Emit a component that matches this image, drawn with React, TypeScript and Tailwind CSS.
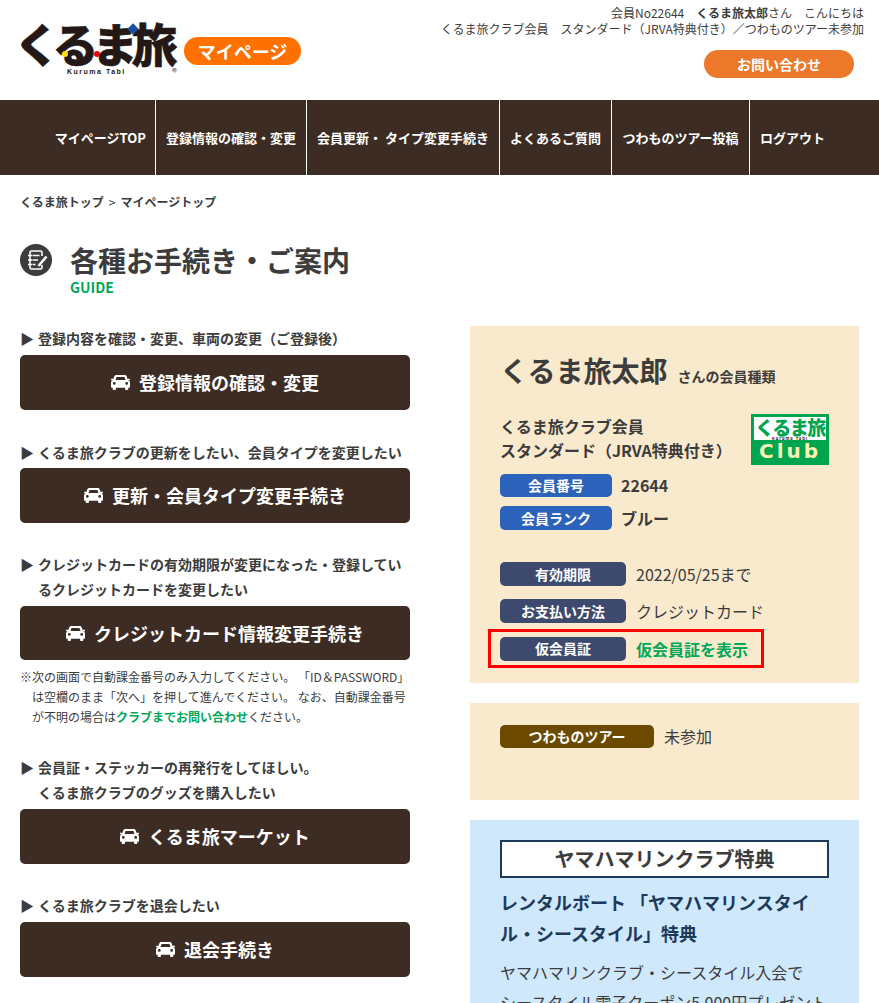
function Car({ className = "" }: { className?: string }) {
  return (
    <svg viewBox="0 0 19 15" className={className} fill="currentColor">
      <path fillRule="evenodd" d="M5.300 0h8.400c1 0 1.800.6 2.100 1.500L17 5c1.200.5 2 1.500 2 2.800V12c0 .4-.3.700-.7.700h-1V14c0 .6-.4 1-1 1h-1.200c-.6 0-1-.4-1-1v-1.300H4.900V14c0 .6-.4 1-1 1H2.700c-.6 0-1-.4-1-1v-1.300h-1C.300 12.700 0 12.400 0 12V7.800C0 6.500.800 5.500 2 5l1.200-3.500C3.500.6 4.300 0 5.300 0zM5.600 2 4.500 5h10L13.400 2zM3.300 7a1.400 1.400 0 1 0 0 2.800 1.400 1.400 0 0 0 0-2.800zm12.400 0a1.400 1.400 0 1 0 0 2.800 1.400 1.400 0 0 0 0-2.800z" />
      <rect x="0" y="3.800" width="2.500" height="1.400" rx=".5" />
      <rect x="16.500" y="3.800" width="2.500" height="1.400" rx=".5" />
    </svg>
  );
}

function ActionButton({ label, className = "mt-[4px] h-[55px]" }: { label: string; className?: string }) {
  return (
    <div className={`flex items-center justify-center gap-[9px] rounded-[5px] bg-[#3c2c23] text-[18px] font-bold text-white ${className}`}>
      <Car className="h-[15px] w-[19px]" />
      <span>{label}</span>
    </div>
  );
}

function Lead({ children, className = "" }: { children: React.ReactNode; className?: string }) {
  return (
    <div className={`flex text-[14px] leading-[24.5px] font-bold text-[#3c3c3c] ${className}`}>
      <span className="mr-[3px] w-[15px] shrink-0">▶</span>
      <span>{children}</span>
    </div>
  );
}

function Tag({ label, w, bg, h = "h-[24px]" }: { label: string; w: string; bg: string; h?: string }) {
  return (
    <span className={`flex shrink-0 items-center justify-center rounded-[5px] text-[14px] font-bold text-white ${h} ${w} ${bg}`}>
      {label}
    </span>
  );
}

export default function App() {
  const nav = [
    ["マイページTOP", "w-[156px] justify-end pr-[9px]"],
    ["登録情報の確認・変更", "w-[151px] justify-center"],
    ["会員更新・ タイプ変更手続き", "w-[193px] justify-center"],
    ["よくあるご質問", "w-[112px] justify-center"],
    ["つわものツアー投稿", "w-[138px] justify-center"],
    ["ログアウト", "w-[129px] justify-start pl-[10px]"],
  ];
  return (
    <div className="h-[1003px] w-[879px] overflow-hidden bg-white text-[#3c3c3c] [text-spacing-trim:space-all]" style={{ fontFamily: '"Noto Sans CJK JP", "Noto Sans", sans-serif' }}>
      <header className="flex h-[100px] justify-between">
        <div className="flex items-start pl-[20px] pt-[19px]">
          <div className="relative h-[60px] w-[164px]">
            <div className="-ml-[6px] text-[46px] leading-[46px] font-black tracking-[-6.500px] text-[#231815] [-webkit-text-stroke:0.5px_#231815]">くるま旅</div>
            <span className="absolute left-[109px] top-[6px] h-[8px] w-[8px] rotate-45 bg-[#1d50a2]" />
            <span className="absolute left-[42px] top-[32px] h-[6px] w-[6px] rounded-full bg-[#ffe100]" />
            <span className="absolute left-[74px] top-[32px] h-[6px] w-[6px] rounded-full bg-[#e60012]" />
            <span className="absolute left-[47px] top-[48px] text-[7px] leading-[10px] font-bold tracking-[1.500px] text-[#231815]" style={{ fontFamily: '"Liberation Sans", sans-serif' }}>Kuruma Tabi</span>
            <span className="absolute left-[152px] top-[47px] text-[10px] leading-[12px]">®</span>
          </div>
          <div className="mt-[18px] flex h-[28px] w-[117px] items-center justify-center rounded-full bg-[#fe7000] text-[18px] font-bold text-white">マイページ</div>
        </div>
        <div className="flex flex-col items-end pr-[15px] pt-[5px] text-[12px] leading-[16px]">
          <div>会員No22644　<b>くるま旅太郎</b>さん　こんにちは</div>
          <div>くるま旅クラブ会員　スタンダード（JRVA特典付き）／つわものツアー未参加</div>
          <div className="mr-[10px] mt-[13px] flex h-[28px] w-[150px] items-center justify-center rounded-full bg-[#ec782a] text-[14px] font-bold text-white">お問い合わせ</div>
        </div>
      </header>

      <nav className="flex h-[75px] bg-[#3c2c23] text-[13px] font-bold text-white">
        {nav.map(([label, cls], i) => (
          <div key={label} className={`flex items-center ${cls} ${i < 5 ? "border-r border-white" : ""}`}>{label}</div>
        ))}
      </nav>

      <div className="px-[20px] pt-[18px] text-[12px] leading-[18px] font-bold">くるま旅トップ<span className="mx-[5px] font-normal">&gt;</span>マイページトップ</div>

      <div className="mt-[31px] flex pl-[20px]">
        <div className="mt-[2px] h-[32px] w-[32px] rounded-full bg-[#3c3c3c]">
          <svg viewBox="0 0 32 32" className="h-[32px] w-[32px]" fill="none" stroke="#fff" strokeWidth="1.600">
            <path d="M22 12V8.500c0-.8-.6-1.500-1.500-1.500h-9c-.8 0-1.500.7-1.500 1.500v15c0 .8.7 1.500 1.500 1.500h9c.9 0 1.500-.7 1.500-1.500V21" />
            <path d="M8 11.500h4.500M8 16h4.500M8 20.500h4.500M13 11.500h6.500M13 16h5M13 20.500h2.500" />
            <path d="m18.500 22 8-9.500" strokeWidth="2.600" />
          </svg>
        </div>
        <div className="ml-[18px]">
          <h1 className="text-[28px] leading-[36px] font-bold">各種お手続き・ご案内</h1>
          <div className="text-[14px] leading-[18px] font-bold text-[#00a85a]">GUIDE</div>
        </div>
      </div>

      <div className="mt-[30px] flex items-start gap-[60px] pl-[20px]">
        <div className="w-[390px] shrink-0">
          <Lead>登録内容を確認・変更、車両の変更（ご登録後）</Lead>
          <ActionButton label="登録情報の確認・変更" />
          <Lead className="mt-[30px]">くるま旅クラブの更新をしたい、会員タイプを変更したい</Lead>
          <ActionButton label="更新・会員タイプ変更手続き" />
          <Lead className="mt-[29px]">クレジットカードの有効期限が変更になった・登録しているクレジットカードを変更したい</Lead>
          <ActionButton label="クレジットカード情報変更手続き" className="mt-[5px] h-[54px]" />
          <p className="mt-[7px] pl-[12px] -indent-[12px] text-[12px] leading-[20px]">※次の画面で自動課金番号のみ入力してください。 「ID＆PASSWORD」は空欄のまま「次へ」を押して進んでください。 なお、自動課金番号が不明の場合は<b className="text-[#00a85a]">クラブまでお問い合わせ</b>ください。</p>
          <Lead className="mt-[28px]">会員証・ステッカーの再発行をしてほしい。<br />くるま旅クラブのグッズを購入したい</Lead>
          <ActionButton label="くるま旅マーケット" className="mt-[5px] h-[55px]" />
          <Lead className="mt-[29px]">くるま旅クラブを退会したい</Lead>
          <ActionButton label="退会手続き" />
        </div>

        <div className="w-[389px] shrink-0">
          <section className="h-[357px] bg-[#faeacd] px-[30px] pt-[24px]">
            <div className="flex items-baseline">
              <span className="text-[28px] leading-[40px] font-bold">くるま旅太郎</span>
              <span className="ml-[10px] text-[14px] font-bold">さんの会員種類</span>
            </div>
            <div className="mt-[24px] flex justify-between">
              <div className="text-[16px] leading-[24px] font-bold">くるま旅クラブ会員<br />スタンダード（JRVA特典付き）</div>
              <div className="flex h-[51px] w-[78px] flex-col items-center bg-[#00a54f] p-[3px]">
                <div className="flex h-[24px] w-full flex-col items-center bg-white">
                  <span className="text-[19px] leading-[19px] font-black tracking-[-1.500px] text-[#00a54f]">くるま旅</span>
                  <span className="text-[4px] leading-[4px] font-bold tracking-[1px] text-[#231815]">Kuruma Tabi</span>
                </div>
                <div className="text-[20px] leading-[22px] font-bold tracking-[3px] text-[#fdf3b4]" style={{ fontFamily: '"DejaVu Sans", sans-serif' }}>Club</div>
              </div>
            </div>
            <div className="mt-[9px] flex items-center gap-[9px]">
              <Tag label="会員番号" w="w-[112px]" h="h-[23px]" bg="bg-[#2d62bb]" />
              <span className="text-[16px] leading-[23px] font-bold">22644</span>
            </div>
            <div className="mt-[9px] flex items-center gap-[9px]">
              <Tag label="会員ランク" w="w-[112px]" bg="bg-[#2d62bb]" />
              <span className="text-[16px] leading-[23px] font-bold">ブルー</span>
            </div>
            <div className="mt-[32px] flex items-center gap-[10px]">
              <Tag label="有効期限" w="w-[126px]" bg="bg-[#3e4a6d]" />
              <span className="text-[16px] leading-[24px]">2022/05/25まで</span>
            </div>
            <div className="mt-[13px] flex items-center gap-[10px]">
              <Tag label="お支払い方法" w="w-[126px]" bg="bg-[#3e4a6d]" />
              <span className="text-[16px] leading-[24px]">クレジットカード</span>
            </div>
            <div className="-ml-[12px] mt-[6px] flex h-[39px] w-[276px] items-center gap-[10px] border-[3px] border-[#ff0000] pl-[9px]">
              <Tag label="仮会員証" w="w-[126px]" bg="bg-[#3e4a6d]" />
              <span className="text-[16px] leading-[24px] font-bold text-[#00a85a]">仮会員証を表示</span>
            </div>
          </section>

          <section className="mt-[20px] flex h-[97px] items-start gap-[10px] bg-[#faeacd] px-[30px] pt-[22px]">
            <Tag label="つわものツアー" w="w-[154px]" h="h-[23px]" bg="bg-[#6b4a00]" />
            <span className="text-[16px] leading-[23px]">未参加</span>
          </section>

          <section className="mt-[20px] h-[400px] bg-[#d0e8fc] px-[30px] pt-[20px]">
            <div className="flex h-[38px] items-center justify-center border-2 border-[#1e3a5a] bg-white text-[20px] font-bold">ヤマハマリンクラブ特典</div>
            <h2 className="mt-[9px] text-[18px] leading-[31px] font-bold text-[#1e3a5a]">レンタルボート 「ヤマハマリンスタイル・シースタイル」特典</h2>
            <p className="mt-[8px] text-[16px] leading-[30px]">ヤマハマリンクラブ・シースタイル入会で<br />シースタイル電子クーポン5,000円プレゼント</p>
          </section>
        </div>
      </div>
    </div>
  );
}
